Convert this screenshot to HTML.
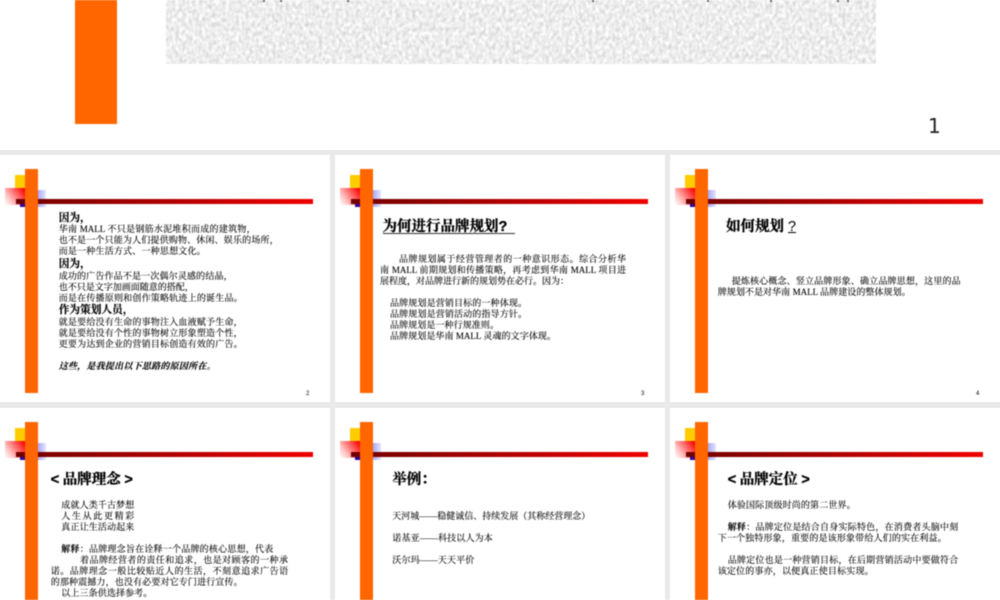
<!DOCTYPE html>
<html><head><meta charset="utf-8">
<style>
html,body{margin:0;padding:0;width:1000px;height:600px;overflow:hidden}
body{background:linear-gradient(180deg,#fff 150px,#e9e9e9 150px,#e9e9e9 155px,#fff 155px,#fff 402px,#e9e9e9 402px,#e9e9e9 408px,#fff 408px)}
#p{position:absolute;left:0;top:0;width:1000px;height:600px;overflow:hidden;filter:blur(.45px);font-family:"Liberation Serif","Noto Serif CJK SC",serif;color:#000}
.g{position:absolute;top:150px;width:5px;height:450px;background:#e9e9e9}
.s{position:absolute;width:330px;height:247px;background:#fff;overflow:hidden}
.s.b2{height:192px}
.s i{position:absolute;display:block}
.y{left:15px;top:20px;width:10px;height:14px;background:#fc0}
.r{left:4.5px;top:33px;width:20.5px;height:17px;background:linear-gradient(235deg,#f00 5%,#ff5a5a 35%,#ffc4c4 72%,#fff 100%)}
.b{left:38px;top:35px;width:7.5px;height:17px;background:linear-gradient(90deg,#a9a9f5,#e6e6ff)}
.d{left:20px;top:48px;width:6px;height:3.5px;background:#309}
.l{left:16px;top:44px;width:297px;height:5px;background:linear-gradient(90deg,#700000,#f00000)}
.o{left:24.7px;top:13.8px;width:13.6px;height:224.6px;background:#f60}
.b2 .o{height:178.2px}
.t,.h,.h1,.n{position:absolute;white-space:nowrap}
.t{font-size:9px;line-height:12px;height:12px;text-align:justify;text-align-last:justify;-webkit-text-stroke:.1px #000}
.h{font-size:10.7px;font-weight:700;line-height:14px;height:14px;-webkit-text-stroke:.15px #000}
.h1{font-size:14.5px;font-weight:700;line-height:20px;height:20px;-webkit-text-stroke:.3px #000}
.h1 span{font-family:"Liberation Sans",sans-serif}
.n{font-family:"Liberation Sans",sans-serif;font-size:6px;line-height:8px;color:#000}
.m{position:absolute;top:0;width:2px;height:1.5px;background:#666}
</style></head>
<body><div id="p">

<div class="g" style="left:330px"></div>
<div class="g" style="left:665px"></div>

<div style="position:absolute;left:75px;top:0;width:41.7px;height:124px;background:#f60"></div>
<svg style="position:absolute;left:166px;top:0" width="710" height="64">
<filter id="f" x="0" y="0" width="100%" height="100%" color-interpolation-filters="sRGB">
<feTurbulence type="fractalNoise" baseFrequency=".3 .22" numOctaves="4" seed="4"/>
<feColorMatrix values="0.28 0.08 0 0 0.75  0.28 0.08 0 0 0.75  0.28 0.08 0 0 0.75  0 0 0 0 1"/>
</filter>
<rect width="710" height="64" filter="url(#f)"/>
</svg>
<div class="m" style="left:263px"></div><div class="m" style="left:280px"></div><div class="m" style="left:347px"></div>
<div class="m" style="left:592px"></div><div class="m" style="left:707px"></div><div class="m" style="left:770px"></div><div class="m" style="left:837px"></div><div class="m" style="left:847px"></div>
<div style="position:absolute;left:928px;top:114px;font-family:'DejaVu Sans',sans-serif;font-size:20px;line-height:24px;color:#222">1</div>

<div class="s" style="left:0;top:155px"><i class="y"></i><i class="r"></i><i class="b"></i><i class="d"></i><i class="l"></i><i class="o"></i></div>
<div class="s" style="left:335px;top:155px"><i class="y"></i><i class="r"></i><i class="b"></i><i class="d"></i><i class="l"></i><i class="o"></i></div>
<div class="s" style="left:670px;top:155px"><i class="y"></i><i class="r"></i><i class="b"></i><i class="d"></i><i class="l"></i><i class="o"></i></div>
<div class="s b2" style="left:0;top:408px"><i class="y"></i><i class="r"></i><i class="b"></i><i class="d"></i><i class="l"></i><i class="o"></i></div>
<div class="s b2" style="left:335px;top:408px"><i class="y"></i><i class="r"></i><i class="b"></i><i class="d"></i><i class="l"></i><i class="o"></i></div>
<div class="s b2" style="left:670px;top:408px"><i class="y"></i><i class="r"></i><i class="b"></i><i class="d"></i><i class="l"></i><i class="o"></i></div>

<!-- slide 2 -->
<div class="h" style="left:58.7px;top:211px">因为，</div>
<div class="t" style="left:58.7px;top:223px;width:197px">华南 MALL 不只是钢筋水泥堆积而成的建筑物，</div>
<div class="t" style="left:58.7px;top:234px;width:220px">也不是一个只能为人们提供购物、休闲、娱乐的场所，</div>
<div class="t" style="left:58.7px;top:245px;width:147px">而是一种生活方式、一种思想文化。</div>
<div class="h" style="left:58.7px;top:257px">因为，</div>
<div class="t" style="left:58.7px;top:270px;width:174px">成功的广告作品不是一次偶尔灵感的结晶，</div>
<div class="t" style="left:58.7px;top:281px;width:128px">也不只是文字加画面随意的搭配，</div>
<div class="t" style="left:58.7px;top:292px;width:184px">而是在传播原则和创作策略轨迹上的诞生品。</div>
<div class="h" style="left:58.7px;top:303px">作为策划人员，</div>
<div class="t" style="left:58.7px;top:316px;width:184px">就是要给没有生命的事物注入血液赋予生命，</div>
<div class="t" style="left:58.7px;top:327px;width:184px">就是要给没有个性的事物树立形象塑造个性，</div>
<div class="t" style="left:58.7px;top:338px;width:184px">更要为达到企业的营销目标创造有效的广告。</div>
<div class="t" style="left:58.7px;top:360px;width:157px;font-weight:700;font-style:italic">这些，是我提出以下思路的原因所在。</div>
<div class="n" style="left:306px;top:390px">2</div>

<!-- slide 3 -->
<div class="h1" style="left:382.5px;top:217px">为何进行品牌规划<span>?</span></div>
<div style="position:absolute;left:382.5px;top:233px;width:132px;height:1px;background:#333"></div>
<div class="t" style="left:399px;top:253px;width:227px">品牌规划属于经营管理者的一种意识形态。综合分析华</div>
<div class="t" style="left:380px;top:264px;width:246px">南 MALL 前期规划和传播策略，再考虑到华南 MALL 项目进</div>
<div class="t" style="left:380px;top:275px;width:189px">展程度，对品牌进行新的规划势在必行。因为：</div>
<div class="t" style="left:390px;top:297px;width:137px">品牌规划是营销目标的一种体现。</div>
<div class="t" style="left:390px;top:308px;width:137px">品牌规划是营销活动的指导方针。</div>
<div class="t" style="left:390px;top:319px;width:109px">品牌规划是一种行规准则。</div>
<div class="t" style="left:390px;top:330px;width:166px">品牌规划是华南 MALL 灵魂的文字体现。</div>
<div class="n" style="left:641px;top:390px">3</div>

<!-- slide 4 -->
<div class="h1" style="left:726px;top:217px">如何规划<span style="font-weight:400;-webkit-text-stroke:0;margin-left:4px;text-decoration:underline">?</span></div>
<div class="t" style="left:731.7px;top:275px;width:229px">提炼核心概念、竖立品牌形象、确立品牌思想，这里的品</div>
<div class="t" style="left:717.7px;top:286px;width:193px">牌规划不是对华南 MALL 品牌建设的整体规划。</div>
<div class="n" style="left:976px;top:390px">4</div>

<!-- slide 5 -->
<div class="h1" style="left:50.7px;top:470px"><span>&lt;</span> 品牌理念 <span>&gt;</span></div>
<div class="t" style="left:61.3px;top:499px;width:73px">成就人类千古梦想</div>
<div class="t" style="left:61.3px;top:510px;width:73px">人生从此更精彩</div>
<div class="t" style="left:61.3px;top:521px;width:73px">真正让生活动起来</div>
<div class="t" style="left:61.3px;top:543px;width:212px"><b>解释</b>：品牌理念旨在诠释一个品牌的核心思想，代表</div>
<div class="t" style="left:80px;top:554px;width:208px">着品牌经营者的责任和追求，也是对顾客的一种承</div>
<div class="t" style="left:50.7px;top:565px;width:237.5px">诺。品牌理念一般比较贴近人的生活，不刻意追求广告语</div>
<div class="t" style="left:50.7px;top:576px;width:192px">的那种震撼力，也没有必要对它专门进行宣传。</div>
<div class="t" style="left:61.3px;top:587px;width:91px">以上三条供选择参考。</div>

<!-- slide 6 -->
<div class="h1" style="left:392.3px;top:470px">举例：</div>
<div class="t" style="left:392.3px;top:510px;width:198px">天河城——稳健诚信、持续发展（其称经营理念）</div>
<div class="t" style="left:392.3px;top:532px;width:100.5px">诺基亚——科技以人为本</div>
<div class="t" style="left:392.3px;top:554px;width:82px">沃尔玛——天天平价</div>

<!-- slide 7 -->
<div class="h1" style="left:727.7px;top:470px"><span>&lt;</span> 品牌定位 <span>&gt;</span></div>
<div class="t" style="left:727.7px;top:499px;width:128px">体验国际顶级时尚的第二世界。</div>
<div class="t" style="left:727.7px;top:521px;width:230.6px"><b>解释</b>：品牌定位是结合自身实际特色，在消费者头脑中刻</div>
<div class="t" style="left:717.7px;top:532px;width:229px">下一个独特形象，重要的是该形象带给人们的实在利益。</div>
<div class="t" style="left:727.7px;top:554px;width:230.6px">品牌定位也是一种营销目标，在后期营销活动中要做符合</div>
<div class="t" style="left:717.7px;top:565px;width:156px">该定位的事亦，以便真正使目标实现。</div>

</div></body></html>
